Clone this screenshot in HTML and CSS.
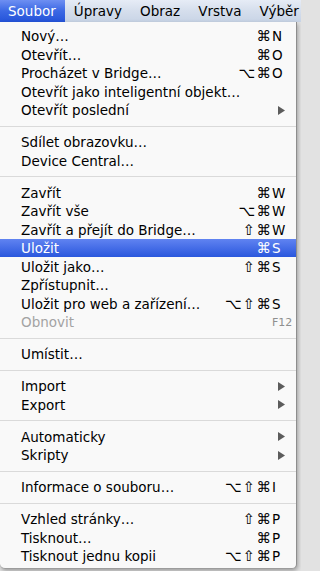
FILE: index.html
```html
<!DOCTYPE html>
<html lang="cs">
<head>
<meta charset="utf-8">
<title>Soubor</title>
<link rel="stylesheet" href="styles.css">
</head>
<body>
<div class="screen">
  <nav class="menubar">
    <span class="mb-item active">Soubor</span>
    <span class="mb-item">Úpravy</span>
    <span class="mb-item">Obraz</span>
    <span class="mb-item">Vrstva</span>
    <span class="mb-item">Výběr</span>
  </nav>
  <div class="menu">
    <div class="item"><span class="label">Nový…</span><span class="mods">⌘</span><span class="key">N</span></div>
    <div class="item"><span class="label">Otevřít…</span><span class="mods">⌘</span><span class="key">O</span></div>
    <div class="item"><span class="label">Procházet v Bridge…</span><span class="mods">⌥⌘</span><span class="key">O</span></div>
    <div class="item"><span class="label">Otevřít jako inteligentní objekt…</span></div>
    <div class="item"><span class="label">Otevřít poslední</span><span class="key"><svg class="arrow" viewBox="0 0 7 9"><polygon points="0,0 7,4.5 0,9"/></svg></span></div>
    <div class="sep"></div>
    <div class="item"><span class="label">Sdílet obrazovku…</span></div>
    <div class="item"><span class="label">Device Central…</span></div>
    <div class="sep"></div>
    <div class="item"><span class="label">Zavřít</span><span class="mods">⌘</span><span class="key">W</span></div>
    <div class="item"><span class="label">Zavřít vše</span><span class="mods">⌥⌘</span><span class="key">W</span></div>
    <div class="item"><span class="label">Zavřít a přejít do Bridge…</span><span class="mods">⇧⌘</span><span class="key">W</span></div>
    <div class="item hl"><span class="label">Uložit</span><span class="mods">⌘</span><span class="key">S</span></div>
    <div class="item"><span class="label">Uložit jako…</span><span class="mods">⇧⌘</span><span class="key">S</span></div>
    <div class="item"><span class="label">Zpřístupnit…</span></div>
    <div class="item"><span class="label">Uložit pro web a zařízení…</span><span class="mods">⌥⇧⌘</span><span class="key">S</span></div>
    <div class="item dis"><span class="label">Obnovit</span><span class="key fkey">F12</span></div>
    <div class="sep"></div>
    <div class="item"><span class="label">Umístit…</span></div>
    <div class="sep"></div>
    <div class="item"><span class="label">Import</span><span class="key"><svg class="arrow" viewBox="0 0 7 9"><polygon points="0,0 7,4.5 0,9"/></svg></span></div>
    <div class="item"><span class="label">Export</span><span class="key"><svg class="arrow" viewBox="0 0 7 9"><polygon points="0,0 7,4.5 0,9"/></svg></span></div>
    <div class="sep"></div>
    <div class="item"><span class="label">Automaticky</span><span class="key"><svg class="arrow" viewBox="0 0 7 9"><polygon points="0,0 7,4.5 0,9"/></svg></span></div>
    <div class="item"><span class="label">Skripty</span><span class="key"><svg class="arrow" viewBox="0 0 7 9"><polygon points="0,0 7,4.5 0,9"/></svg></span></div>
    <div class="sep"></div>
    <div class="item"><span class="label">Informace o souboru…</span><span class="mods">⌥⇧⌘</span><span class="key">I</span></div>
    <div class="sep"></div>
    <div class="item"><span class="label">Vzhled stránky…</span><span class="mods">⇧⌘</span><span class="key">P</span></div>
    <div class="item"><span class="label">Tisknout…</span><span class="mods">⌘</span><span class="key">P</span></div>
    <div class="item"><span class="label">Tisknout jednu kopii</span><span class="mods">⌥⇧⌘</span><span class="key">P</span></div>
  </div>
</div>
</body>
</html>
```

FILE: styles.css
```css
html, body {
  margin: 0;
  padding: 0;
}
body {
  width: 301px;
  height: 571px;
  overflow: hidden;
  background: #e2e2e2;
  font-family: "DejaVu Sans", "Liberation Sans", sans-serif;
  font-size: 13.5px;
  color: #000;
}
.screen {
  display: flex;
  flex-direction: column;
}
.menubar {
  display: flex;
  height: 22px;
  overflow: hidden;
  background: linear-gradient(#e6ecf6, #d5deec 50%, #c8d4e6);
}
.mb-item {
  padding: 0 9px;
  line-height: 22px;
  white-space: nowrap;
}
.mb-item.active {
  padding-left: 8px;
  color: #fff;
  background: linear-gradient(#6e8ff2, #3b68e4 50%, #2453d9);
}
.menu {
  width: 296px;
  padding: 4.75px 0 3px;
  background: #f9f9f9;
  border-right: 1px solid #8e8e8e;
  border-bottom: 1px solid #9c9c9c;
  border-radius: 0 0 5px 5px;
  box-shadow: 1px 2px 4px rgba(0, 0, 0, 0.3);
}
.item {
  display: flex;
  align-items: center;
  height: 18.5px;
  padding: 0 2px 0 21px;
  white-space: nowrap;
}
.label {
  flex: 1;
}
.mods {
  font-size: 14.5px;
  letter-spacing: 1.5px;
  margin-right: -0.5px;
  text-align: right;
}
.key {
  width: 22px;
  display: flex;
  align-items: center;
}
.item.hl {
  color: #fff;
  background: linear-gradient(#6083f1, #2a57dd);
}
.item.dis {
  color: #a3a3a3;
}
.fkey {
  font-size: 11px;
  color: #8f8f8f;
}
.arrow {
  width: 7px;
  height: 9px;
  margin-left: 6px;
  fill: #5c5c5c;
}
.sep {
  height: 13.5px;
  display: flex;
  align-items: center;
}
.sep::before {
  content: "";
  flex: 1;
  height: 1px;
  background: #dadada;
}
```
